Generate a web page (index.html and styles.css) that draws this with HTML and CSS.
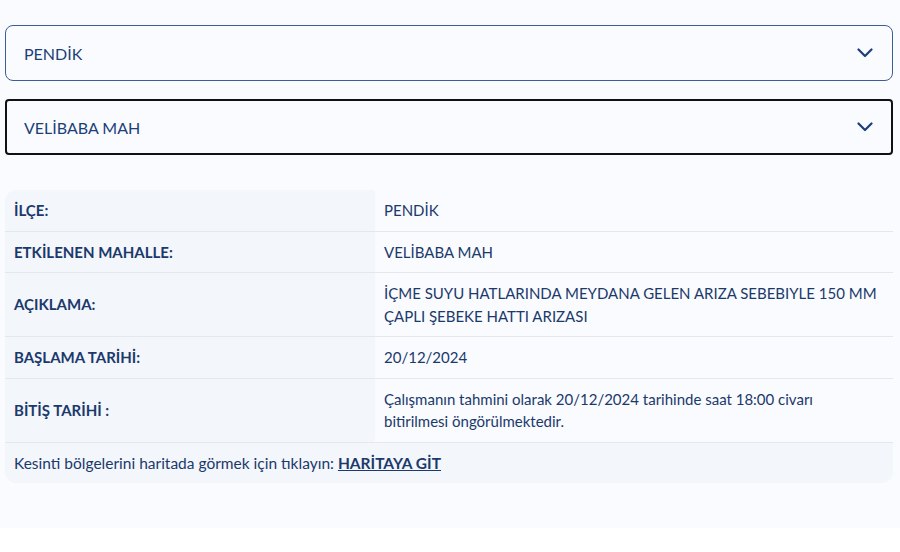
FILE: index.html
```html
<!DOCTYPE html>
<html lang="tr">
<head>
    <meta charset="UTF-8">
    <meta name="viewport" content="width=device-width, initial-scale=1.0">
    <title>Kesinti Bilgisi</title>
    <link rel="stylesheet" href="styles.css">
</head>
<body>
    <div class="page">
        <div class="select-box">
            <span>PENDİK</span>
            <svg class="chevron" width="16" height="10" viewBox="0 0 16 10"><path d="M1.5 1.5 L8 8 L14.5 1.5" fill="none" stroke="#1d3f78" stroke-width="2.2" stroke-linecap="round" stroke-linejoin="round"/></svg>
        </div>
        <div class="select-box focused">
            <span>VELİBABA MAH</span>
            <svg class="chevron" width="16" height="10" viewBox="0 0 16 10"><path d="M1.5 1.5 L8 8 L14.5 1.5" fill="none" stroke="#1d3f78" stroke-width="2.2" stroke-linecap="round" stroke-linejoin="round"/></svg>
        </div>

        <table class="info">
            <tr>
                <th>İLÇE:</th>
                <td>PENDİK</td>
            </tr>
            <tr>
                <th>ETKİLENEN MAHALLE:</th>
                <td>VELİBABA MAH</td>
            </tr>
            <tr>
                <th>AÇIKLAMA:</th>
                <td>İÇME SUYU HATLARINDA MEYDANA GELEN ARIZA SEBEBIYLE 150 MM ÇAPLI ŞEBEKE HATTI ARIZASI</td>
            </tr>
            <tr>
                <th>BAŞLAMA TARİHİ:</th>
                <td>20/12/2024</td>
            </tr>
            <tr>
                <th>BİTİŞ TARİHİ :</th>
                <td>Çalışmanın tahmini olarak 20/12/2024 tarihinde saat 18:00 civarı<br>bitirilmesi öngörülmektedir.</td>
            </tr>
            <tr class="map-row">
                <td colspan="2">Kesinti bölgelerini haritada görmek için tıklayın: <a href="#">HARİTAYA GİT</a></td>
            </tr>
        </table>
    </div>
</body>
</html>
```

FILE: styles.css
```css
body {
    margin: 0;
    background-color: white;
    font-family: Lato, "Open Sans", sans-serif;
    color: #1b396b;
}
.page {
    height: 528px;
    box-sizing: border-box;
    padding: 25px 7px 0 5px;
    background-color: #f9fbfe;
}
.select-box {
    display: flex;
    align-items: center;
    justify-content: space-between;
    height: 56px;
    box-sizing: border-box;
    padding: 0 19px 0 18px;
    border: 1px solid #3b5d98;
    border-radius: 8px;
    font-size: 16px;
    color: #1d3f78;
    margin-bottom: 18px;
}
.select-box.focused {
    border: 2px solid #111;
    border-radius: 4px;
    padding: 0 18px 0 17px;
}
.chevron {
    display: block;
}
.info {
    width: 100%;
    margin-top: 35px;
    border-collapse: separate;
    border-spacing: 0;
    font-size: 15px;
    line-height: 22.5px;
    border-radius: 12px;
    overflow: hidden;
    background-color: #f3f6fb;
}
.info th,
.info td {
    padding: 9px;
    text-align: left;
    vertical-align: middle;
    border-bottom: 1px solid #e4e7eb;
}
.info th {
    width: 352px;
    font-weight: 700;
    background-color: #f3f6fb;
}
.info td {
    background-color: #f9fbfe;
}
.info .map-row td {
    background-color: #f3f6fb;
    border-bottom: none;
    font-size: 15.5px;
}
.map-row a {
    color: #1b396b;
    font-weight: 700;
    text-decoration: underline;
}
```
